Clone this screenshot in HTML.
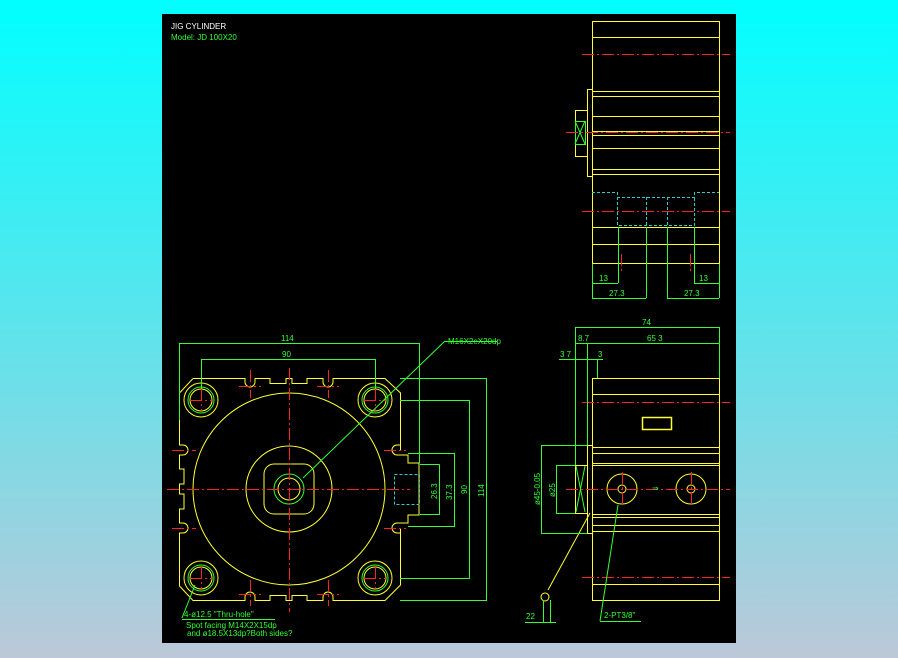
<!DOCTYPE html>
<html><head><meta charset="utf-8"><style>
html,body{margin:0;padding:0;width:898px;height:658px;overflow:hidden;background:linear-gradient(#00ffff,#bcc8d8);}
svg{position:absolute;left:0;top:0}
text{font-family:"Liberation Sans",sans-serif;font-size:8px}
</style></head><body>
<svg width="898" height="658" viewBox="0 0 898 658">
<rect x="162" y="14" width="574" height="629" fill="#000"/>
<text x="171" y="29" fill="#fff" font-size="9">JIG CYLINDER</text>
<text x="171" y="40" fill="#33ff33" font-size="9">Model: JD 100X20</text>

<!-- top-right view -->
<g fill="none" stroke="#ffff33" stroke-width="1">
<rect x="592.5" y="21.5" width="127" height="242"/>
<path d="M592 37.5H719M592 91.5H719M592 96.5H719M592 116.5H719M592 131.5H719M592 135.5H719M592 148.5H719M592 169.5H719M592 174.5H719M592 227.5H719M592 244.5H719"/>
<path d="M592 89.5H587.5V176.5H592M587 110.5H575.5V156.5H587"/>
</g>
<g fill="none" stroke="#33ff33"><rect x="575.5" y="121.5" width="10" height="23"/><path d="M575 121L585 144M585 121L575 144"/></g>
<g stroke="#ff2222" stroke-dasharray="12 3 2 3"><path d="M582 54.5H730M566 132.5H730M582 211.5H730M621.5 254V273M690.5 254V273"/></g>
<g fill="none" stroke="#33cccc" stroke-dasharray="3 2"><path d="M592 192.5H617.5V197.5H694.5V192.5H719M617.5 197V225.5H694.5V197M646.5 197V225M667.5 197V225"/></g>
<g fill="none" stroke="#33ff33"><path d="M592.5 264V298M618.5 227V283M646.5 227V298M667.5 227V298M694.5 227V283M719.5 264V298M592 283.5H618M694 283.5H719M592 298.5H646M667 298.5H719"/></g>
<g fill="#33ff33"><text x="599" y="281">13</text><text x="699" y="281">13</text><text x="609" y="296">27.3</text><text x="684" y="296">27.3</text></g>

<!-- bottom-right view -->
<g fill="none" stroke="#ffff33">
<rect x="592.5" y="378.5" width="127" height="222"/>
<path d="M592 394.5H719M592 447.5H719M592 453.5H719M592 463.5H719M592 465.5H719M592 514.5H719M592 517.5H719M592 525.5H719M592 531.5H719M592 584.5H719"/>
<path d="M592 445.5H587.5V533.5H592M587 465.5H575.5V513.5H587"/>
<circle cx="622" cy="489" r="15"/><circle cx="622" cy="489" r="4"/>
<circle cx="691" cy="489" r="15"/><circle cx="691" cy="489" r="4"/>
<rect x="642.5" y="417.5" width="29" height="12" stroke-width="1.5"/>
<path d="M590 513L548 590"/><circle cx="545" cy="597" r="4"/>
</g>
<path d="M576 466L585 512M585 466L576 512" stroke="#33ff33"/>
<g stroke="#ff2222" stroke-dasharray="12 3 2 3"><path d="M582 402.5H730M566 489.5H730M582 577.5H730M622.5 472V506M691.5 472V506"/></g>
<g fill="none" stroke="#33ff33">
<path d="M575.5 327V465M719.5 327V378M575 327.5H719M575 343.5H719M559 359.5H603M587.5 343V445M597.5 359V378"/>
<path d="M541.5 445V533M541 445.5H587M541 533.5H587M556.5 465V513M556 465.5H575M556 513.5H575"/>
<path d="M543.5 600V623M550.5 600V623M525 622.5H556M618 505L600 621M600 621.5H641"/>
</g>
<g fill="#33ff33"><text x="642" y="325">74</text><text x="578" y="341">8.7</text><text x="647" y="341">65 3</text><text x="560" y="357">3 7</text><text x="598" y="357">3</text>
<text x="526" y="619">22</text><text x="604" y="618">2-PT3/8"</text>
<text transform="translate(540,505) rotate(-90)">ø45-0.05</text><text transform="translate(555,497) rotate(-90)">ø25</text>
<text x="652" y="491" font-size="5">⇒</text></g>

<!-- left view -->
<g fill="none" stroke="#ffff33">
<path d="M193 378.5H245M255 378.5H270V383.5H286V378.5H292V383.5H307V378.5H323M333 378.5H385L400.5 393V450M400.5 528V585L385 600.5H333M323 600.5H307V595.5H292V600.5H286V595.5H270V600.5H255M245 600.5H193L179.5 586V533M179.5 523V509H184V494H179.5V484H184V469H179.5V455M179.5 445V393L193 378.5"/>
<path d="M245 378V382a5 5 0 0 0 10 0V378M323 378V382a5 5 0 0 0 10 0V378M245 601V597a5 5 0 0 1 10 0V601M323 601V597a5 5 0 0 1 10 0V601"/>
<path d="M179 445H183a5 5 0 0 1 0 10H179M179 523H183a5 5 0 0 1 0 10H179M401 445H397a5 5 0 0 0 0 10H401M401 523H397a5 5 0 0 0 0 10H401"/>
<path d="M400 455H408V463H419V515H408V523H400"/>
<circle cx="289" cy="489" r="96"/><circle cx="289" cy="489" r="43"/>
<rect x="264" y="464" width="50" height="50" rx="10"/>
<circle cx="289" cy="489" r="11"/>
<circle cx="201" cy="400" r="17"/><circle cx="201" cy="400" r="11"/>
<circle cx="375" cy="400" r="17"/><circle cx="375" cy="400" r="11"/>
<circle cx="201" cy="578" r="17"/><circle cx="201" cy="578" r="11"/>
<circle cx="375" cy="578" r="17"/><circle cx="375" cy="578" r="11"/>
</g>
<g fill="none" stroke="#33ff33">
<circle cx="289" cy="489" r="15"/>
<circle cx="201" cy="400" r="13"/><circle cx="375" cy="400" r="13"/><circle cx="201" cy="578" r="13"/><circle cx="375" cy="578" r="13"/>
<path d="M179.5 343V420M419.5 343V463M179 343.5H419M201.5 359V400M375.5 359V400M201 359.5H375"/>
<path d="M420 464.5H440M420 514.5H440M439.5 464V515M408 453.5H455M408 526.5H455M454.5 453V526M400 400.5H470M400 578.5H470M469.5 400V578M400 378.5H487M400 600.5H487M486.5 378V600"/>
<path d="M303 478L445 341M445 341.5H497M195 585L182 618M182 619.5H275"/>
</g>
<rect x="394.5" y="474.5" width="25" height="30" fill="none" stroke="#33cccc" stroke-dasharray="3 2"/>
<g stroke="#ff2222" stroke-dasharray="12 3 2 3"><path d="M167 489.5H410M289.5 368V612M190 400.5H212M201.5 389V411M364 400.5H386M375.5 389V411M190 578.5H212M201.5 567V589M364 578.5H386M375.5 567V589M239 386.5H261M250.5 370V398M317 386.5H339M328.5 370V398M239 594.5H261M250.5 580V606M317 594.5H339M328.5 580V606M172 450.5H196M172 528.5H196M384 450.5H406M384 528.5H406"/></g>
<g fill="#33ff33"><text x="281" y="341">114</text><text x="282" y="357">90</text><text x="448" y="344" font-size="7">M16X2eX20dp</text>
<text transform="translate(437,499) rotate(-90)">26.3</text><text transform="translate(452,500) rotate(-90)">37.3</text><text transform="translate(467,494) rotate(-90)">90</text><text transform="translate(484,497) rotate(-90)">114</text>
<text x="184" y="617" font-size="7">4-ø12.5 "Thru-hole"</text><text x="186" y="628" font-size="7">Spot facing  M14X2X15dp</text><text x="187" y="636" font-size="7">and ø18.5X13dp?Both sides?</text></g>
</svg>
</body></html>
